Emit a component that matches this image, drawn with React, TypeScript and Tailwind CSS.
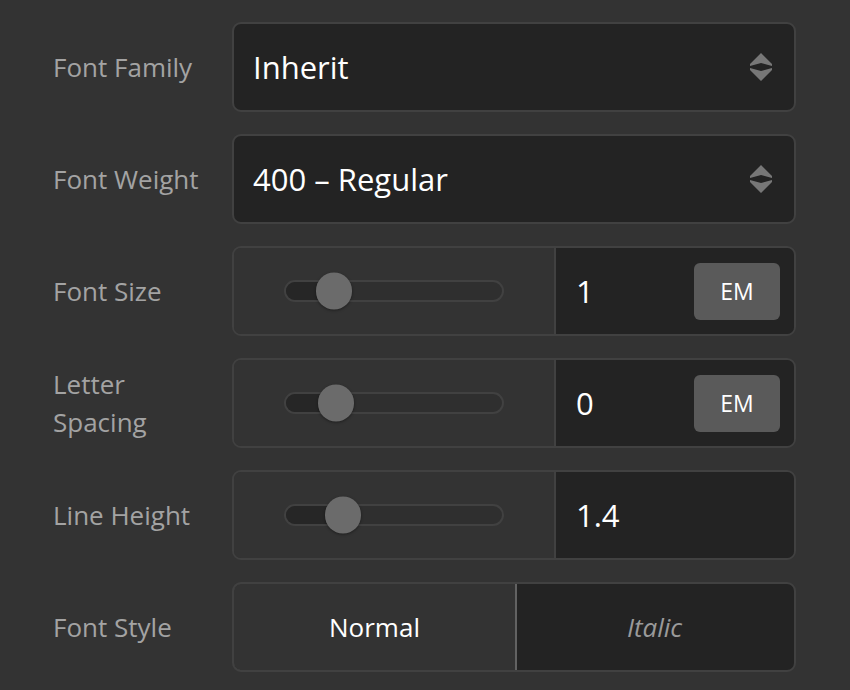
import type { ReactNode } from "react"

const font = { fontFamily: '"Open Sans", "Noto Sans", sans-serif' }

function Row({ label, children }: { label: string; children: ReactNode }) {
  return (
    <div className="flex h-[90px] items-center">
      <div className="w-[179px] shrink-0 pr-5 text-[26px] leading-[38px] text-[#a3a3a3]">{label}</div>
      <div className="h-full flex-1">{children}</div>
    </div>
  )
}

function Select({ value }: { value: string }) {
  return (
    <div className="flex h-full items-center rounded-[9px] border-2 border-[#414141] bg-[#232323] pl-[19px] pr-[21px]">
      <span className="flex-1 text-[31px] text-white">{value}</span>
      <svg width="24" height="30" viewBox="0 0 24 30" className="text-[#777]">
        <path d="M12 1 L23 12 L23 14 L12 11 L1 14 L1 12 Z" fill="currentColor" />
        <path d="M12 29 L23 18 L23 16 L12 19 L1 16 L1 18 Z" fill="currentColor" />
      </svg>
    </div>
  )
}

function Slider({ value, pos, unit }: { value: string; pos: number; unit?: string }) {
  return (
    <div className="flex h-full overflow-hidden rounded-[9px] border-2 border-[#414141]">
      <div className="flex w-[320px] shrink-0 items-center justify-center bg-[#333333]">
        <div className="relative h-[22px] w-[220px] rounded-full border-2 border-[#414141] bg-[#2f2f2f]">
          <div className="absolute inset-y-0 left-0 rounded-l-full bg-[#262626]" style={{ width: pos }} />
          <div
            className="absolute top-1/2 h-[37px] w-[36px] -translate-x-1/2 -translate-y-1/2 rounded-full bg-[#6b6b6b] shadow-[0_1px_3px_rgba(0,0,0,0.4)]"
            style={{ left: pos }}
          />
        </div>
      </div>
      <div className="flex flex-1 items-center border-l-2 border-[#414141] bg-[#232323] pl-[20px] pr-[14px]">
        <span className="flex-1 text-[31px] text-white">{value}</span>
        {unit && (
          <span className="flex h-[57px] w-[86px] items-center justify-center rounded-[6px] bg-[#5a5a5a] text-[23px] text-white">
            {unit}
          </span>
        )}
      </div>
    </div>
  )
}

export default function App() {
  return (
    <div className="min-h-screen bg-[#333333] pl-[53px] pr-[54px] pt-[22px]" style={font}>
      <div className="flex flex-col gap-[22px]">
        <Row label="Font Family">
          <Select value="Inherit" />
        </Row>
        <Row label="Font Weight">
          <Select value="400 – Regular" />
        </Row>
        <Row label="Font Size">
          <Slider value="1" pos={48} unit="EM" />
        </Row>
        <Row label="Letter Spacing">
          <Slider value="0" pos={50} unit="EM" />
        </Row>
        <Row label="Line Height">
          <Slider value="1.4" pos={57} />
        </Row>
        <Row label="Font Style">
          <div className="flex h-full overflow-hidden rounded-[9px] border-2 border-[#414141] bg-[#232323]">
            <button className="-m-[2px] flex w-[285px] items-center justify-center rounded-l-[9px] border-2 border-[#626262] bg-[#333333] text-[26px] text-white">
              Normal
            </button>
            <button className="flex flex-1 items-center justify-center text-[26px] italic text-[#9a9a9a]">
              Italic
            </button>
          </div>
        </Row>
      </div>
    </div>
  )
}
